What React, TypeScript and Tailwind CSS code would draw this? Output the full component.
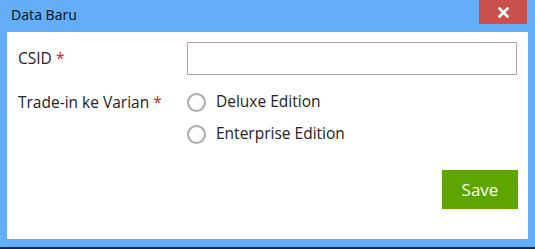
export default function App() {
  return (
    <div className="w-[535px] h-[249px] bg-[#64aef8] flex flex-col" style={{ fontFamily: '"Open Sans", sans-serif' }}>
      {/* Title bar */}
      <div className="h-[32px] flex items-start justify-between shrink-0">
        <span className="pl-[11px] pt-[6px] text-[14px] leading-[18px] text-[#0b1a2a]" style={{ fontFamily: '"Noto Sans", sans-serif' }}>
          Data Baru
        </span>
        <button className="w-[48px] h-[24px] mr-[8px] bg-[#c9504b] flex items-center justify-center text-white">
          <svg width="11" height="11" viewBox="0 0 11 11">
            <path d="M1.5 1.5L9.5 9.5M9.5 1.5L1.5 9.5" stroke="#fff" strokeWidth="2.6" strokeLinecap="round" />
          </svg>
        </button>
      </div>

      {/* Body */}
      <div className="mx-[7px] w-[521px] h-[207px] bg-white shrink-0 pt-[10px] pl-[11px] pr-[10px] text-[15.5px] text-[#222]">
        <div className="flex items-center h-[33px]">
          <label className="w-[169px]">
            CSID <span className="text-[#e0201b]">*</span>
          </label>
          <input className="w-[330px] h-[33px] border border-[#a9a9a9] outline-none" />
        </div>

        <div className="flex mt-[11px]">
          <label className="w-[169px] leading-[32px] h-[32px]">
            Trade-in ke Varian <span className="text-[#e0201b]">*</span>
          </label>
          <div className="flex flex-col">
            {['Deluxe Edition', 'Enterprise Edition'].map((v) => (
              <label key={v} className="flex items-center h-[32px] gap-[10px]">
                <span className="w-[19px] h-[19px] rounded-full border-2 border-[#a9a9a9] bg-white" />
                {v}
              </label>
            ))}
          </div>
        </div>

        <div className="flex justify-end mt-[20px]">
          <button className="w-[76px] h-[39px] bg-[#5ea500] text-white text-[17px]">Save</button>
        </div>
      </div>

      <div className="flex-1" />
      <div className="h-[2px] bg-[#1c2a38]" />
    </div>
  );
}
